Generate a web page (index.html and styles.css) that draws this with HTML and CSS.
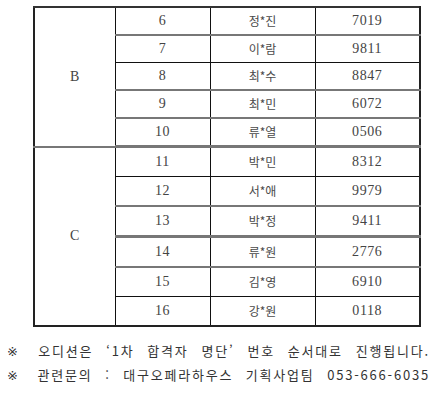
FILE: index.html
```html
<!DOCTYPE html>
<html lang="ko">
<head>
<meta charset="utf-8">
<link rel="stylesheet" href="styles.css">
</head>
<body>
<div class="page">
  <table class="roster">
    <colgroup>
      <col class="c-group"><col class="c-no"><col class="c-name"><col class="c-code">
    </colgroup>
    <tbody class="grp-b">
      <tr class="r-b"><td class="group" rowspan="5">B</td><td>6</td><td class="ko">정*진</td><td>7019</td></tr>
      <tr class="r-b gray"><td>7</td><td class="ko">이*람</td><td>9811</td></tr>
      <tr class="r-b"><td>8</td><td class="ko">최*수</td><td>8847</td></tr>
      <tr class="r-b gray"><td>9</td><td class="ko">최*민</td><td>6072</td></tr>
      <tr class="r-b gray"><td>10</td><td class="ko">류*열</td><td>0506</td></tr>
    </tbody>
    <tbody class="grp-c">
      <tr class="r-c gray2"><td class="group" rowspan="6">C</td><td>11</td><td class="ko">박*민</td><td>8312</td></tr>
      <tr class="r-c"><td>12</td><td class="ko">서*애</td><td>9979</td></tr>
      <tr class="r-c gray"><td>13</td><td class="ko">박*정</td><td>9411</td></tr>
      <tr class="r-c gray2"><td>14</td><td class="ko">류*원</td><td>2776</td></tr>
      <tr class="r-c gray"><td>15</td><td class="ko">김*영</td><td>6910</td></tr>
      <tr class="r-c"><td>16</td><td class="ko">강*원</td><td>0118</td></tr>
    </tbody>
  </table>
  <div class="notes">
    <p class="note"><span class="mark">※</span> 오디션은 ‘1차 합격자 명단’ 번호 순서대로 진행됩니다.</p>
    <p class="note"><span class="mark">※</span> 관련문의 : 대구오페라하우스 기획사업팀 053-666-6035</p>
  </div>
</div>
</body>
</html>
```

FILE: styles.css
```css
html, body {
  margin: 0;
  padding: 0;
  background: #ffffff;
}

.page {
  width: 431px;
  height: 408px;
  overflow: hidden;
  padding-top: 6px;
  box-sizing: border-box;
  font-family: "Liberation Serif", "Noto Sans CJK KR", serif;
  color: #3a3a3a;
}

.roster {
  margin-left: 33px;
  width: 386px;
  border-collapse: collapse;
  table-layout: fixed;
  border-top: 2px solid #333;
  border-left: 2px solid #222;
  border-right: 2px solid #222;
  border-bottom: 2px solid #222;
}

.c-group { width: 81px; }
.c-no { width: 95px; }
.c-name { width: 105px; }
.c-code { width: 105px; }

.roster td {
  border: 1px solid #111;
  padding: 0;
  text-align: center;
  vertical-align: middle;
  font-size: 14px;
  letter-spacing: 0.6px;
  line-height: 1;
  color: #444;
}

.r-b td { height: 26px; }
.r-c td { height: 28px; }

.roster tr.gray td { border-top: 2px solid #777; }
.roster tr.gray2 td { border-top: 3px solid #777; }
.roster tr.gray td.group,
.roster tr.gray2 td.group { border-top: 2px solid #777; }

.roster td.group {
  font-size: 14px;
  letter-spacing: 0;
}

.roster td.ko {
  font-family: "Noto Sans CJK KR", sans-serif;
  font-size: 12px;
  letter-spacing: 0;
  color: #4a4a4a;
}

.notes {
  margin-top: 12px;
  padding-left: 7px;
  width: 423px;
  font-family: "Noto Sans CJK KR", sans-serif;
  font-size: 13px;
  letter-spacing: 1.8px;
  color: #333;
}

.note {
  margin: 0;
  height: 24px;
  line-height: 24px;
  text-align: justify;
  text-align-last: justify;
  white-space: nowrap;
}

.mark {
  font-family: "DejaVu Sans", sans-serif;
  font-size: 13px;
  letter-spacing: 0;
}
```
